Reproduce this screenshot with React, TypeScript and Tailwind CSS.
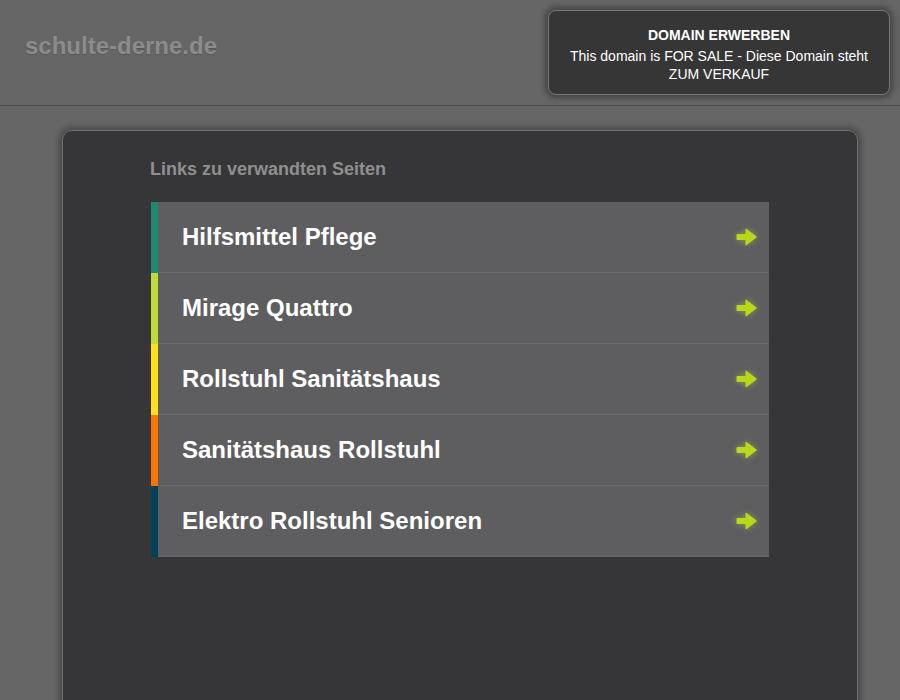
import React from 'react';

const links = [
    { label: 'Hilfsmittel Pflege', color: 'bg-[#1f8a70]' },
    { label: 'Mirage Quattro', color: 'bg-[#bedb39]' },
    { label: 'Rollstuhl Sanitätshaus', color: 'bg-[#ffe11a]' },
    { label: 'Sanitätshaus Rollstuhl', color: 'bg-[#fd7400]' },
    { label: 'Elektro Rollstuhl Senioren', color: 'bg-[#004358]' },
];

function Arrow() {
    return (
        <svg width="22" height="20" viewBox="0 0 22 20" className="drop-shadow-[0_0_3px_rgba(190,219,57,0.5)]">
            <path d="M1 7.5 H10 V2 L20.5 10 L10 18 V12.5 H1 Z" fill="#b8d81c" stroke="#b8d81c" strokeWidth="1" strokeLinejoin="round" />
        </svg>
    );
}

export default function App() {
    return (
        <div className="h-[700px] w-[900px] overflow-hidden bg-[#666666] font-['Liberation_Sans',Arial,sans-serif]">
            {/* Header */}
            <div className="flex h-[106px] items-start justify-between border-b border-[#4d4d4d] pr-[10px] pl-[25px]">
                <div className="pt-[28px] text-[24px] font-bold text-[#8c8c8c] [text-shadow:0_1px_1px_rgba(0,0,0,0.15)]">
                    schulte-derne.de
                </div>
                <div className="mt-[10px] flex h-[85px] w-[342px] flex-col items-center rounded-[8px] border border-[#777777] bg-[#363636] pt-[15px] text-center text-[14px] leading-[18px] text-white shadow-[0_0_6px_3px_rgba(0,0,0,0.35)]">
                    <div className="mb-[3px] font-bold">DOMAIN ERWERBEN</div>
                    <div>This domain is FOR SALE - Diese Domain steht</div>
                    <div>ZUM VERKAUF</div>
                </div>
            </div>

            {/* Main card */}
            <div className="ml-[62px] mt-[24px] h-[600px] w-[796px] rounded-t-[10px] border border-[#6e6e6e] bg-[#363638] pt-[25px] pl-[87px] pr-[88px] shadow-[0_0_6px_3px_rgba(0,0,0,0.3)]">
                <div className="mb-[19px] text-[18px] font-bold text-[#8f8f8f]">Links zu verwandten Seiten</div>
                <div className="ml-[1px] flex flex-col">
                    {links.map((l) => (
                        <div key={l.label} className="flex h-[71px]">
                            <div className={`w-[7px] ${l.color}`} />
                            <div className="flex flex-1 items-center justify-between border-b border-[#6a6a6a] bg-[#5e5e60] pr-[11px] pl-[24px]">
                                <span className="text-[24px] font-bold text-white">{l.label}</span>
                                <Arrow />
                            </div>
                        </div>
                    ))}
                </div>
            </div>
        </div>
    );
}
